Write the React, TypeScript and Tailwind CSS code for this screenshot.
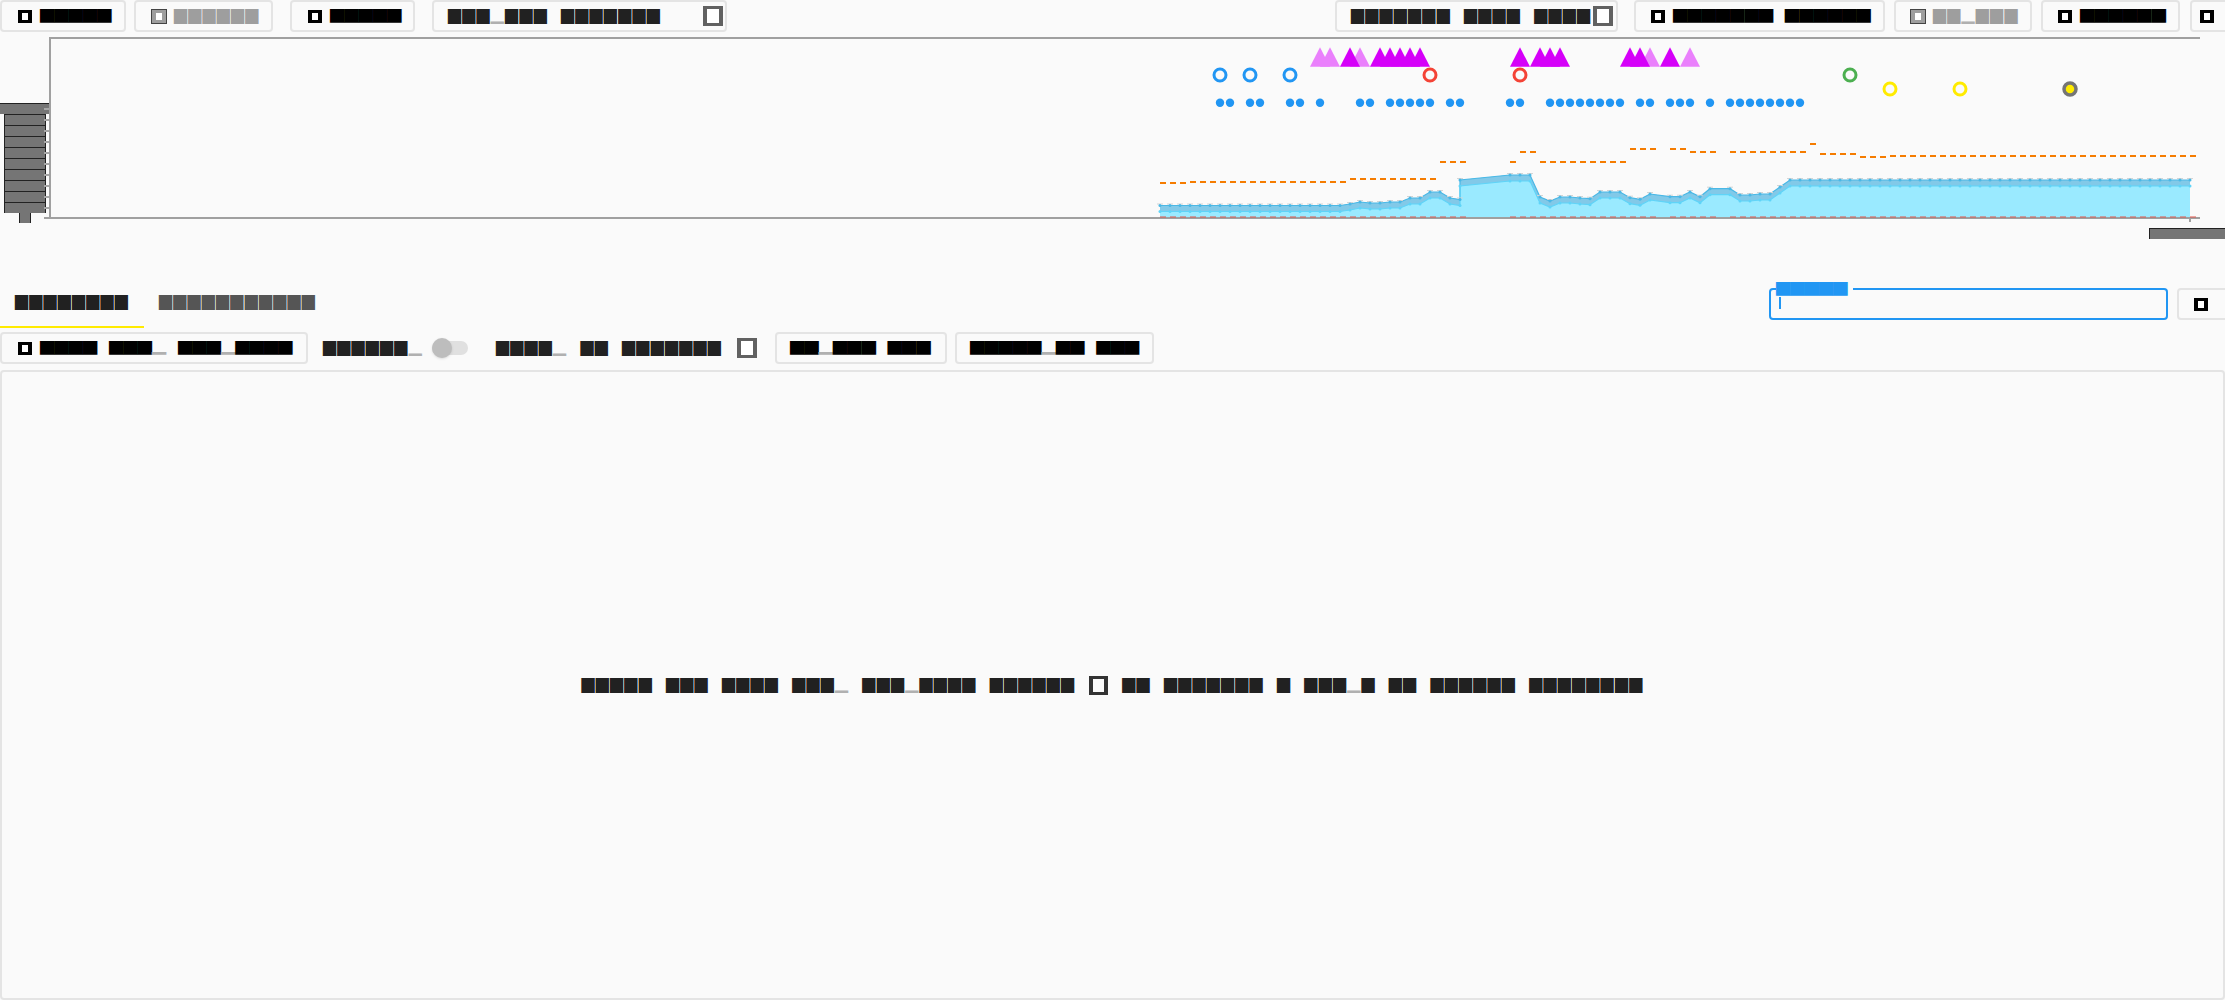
import React from "react";

// the reference font has no glyphs: every character shows as a filled box
const tofu = "pb-[5px] text-[17px] tracking-[1.2px] [word-spacing:6.5px] leading-[16px]";
const solid = "pb-[8px] text-[18.6px] tracking-[-0.02px] [word-spacing:6px] leading-[16px]";

function Label({ text, solidBox, className = "" }: { text: string; solidBox?: boolean; className?: string }) {
  const parts = text.split(/(▁)/);
  return (
    <span className={`inline-block whitespace-pre ${solidBox ? solid : tofu} ${className}`}>
      {parts.map((p, i) =>
        p === "▁" ? (
          <span key={i} className="text-[#b0b0b0]">
            {p}
          </span>
        ) : (
          p
        )
      )}
    </span>
  );
}

function BoxIcon({ gray }: { gray?: boolean }) {
  return (
    <span
      className={`block h-[13px] w-[14px] shrink-0 border-x-[4px] border-y-[3px] bg-white ${
        gray ? "border-[#9e9e9e] outline outline-1 outline-[#444]" : "border-black"
      }`}
    />
  );
}

function BigIcon() {
  return <span className="block h-5 w-5 shrink-0 border-x-[4px] border-y-[3px] border-[#616161] bg-white" />;
}

function Btn({ children, className = "" }: { children: React.ReactNode; className?: string }) {
  return (
    <div className={`flex h-8 shrink-0 items-center rounded border-2 border-[#e4e4e4] bg-[#fafafa] ${className}`}>
      {children}
    </div>
  );
}

function range(from: number, to: number) {
  const out: number[] = [];
  for (let x = from; x <= to; x += 10) out.push(x);
  return out;
}

const BLUE_DOTS = [
  1220, 1230, 1250, 1260, 1290, 1300, 1320, 1360, 1370, 1390, 1400, 1410, 1420, 1430, 1450, 1460, 1510, 1520,
  1550, 1560, 1570, 1580, 1590, 1600, 1610, 1620, 1640, 1650, 1670, 1680, 1690, 1710, 1730, 1740, 1750, 1760,
  1770, 1780, 1790, 1800,
];

const LIGHT_TRI = [1320, 1330, 1360, 1650, 1690];
const DARK_TRI = [1350, 1380, 1390, 1400, 1410, 1420, 1520, 1540, 1550, 1560, 1630, 1640, 1670];

const ORANGE: [number[], number][] = [
  [range(1160, 1180), 183],
  [range(1190, 1340), 182],
  [range(1350, 1430), 179],
  [range(1440, 1460), 162],
  [[1510], 162],
  [[1520, 1530], 152],
  [range(1540, 1620), 162],
  [[1630, 1640, 1650, 1670, 1680], 149],
  [[1690, 1700, 1710], 152],
  [range(1730, 1800), 152],
  [[1810], 144],
  [range(1820, 1850), 154],
  [range(1860, 1880), 157],
  [range(1890, 2190), 156],
];

const BAND: [number, number][] = [
  ...range(1160, 1340).map((x) => [x, 205.5] as [number, number]),
  [1350, 204], [1360, 202], [1370, 203], [1380, 203], [1390, 202], [1400, 202], [1410, 198], [1420, 198],
  [1430, 192], [1440, 192], [1450, 198], [1460, 199.5], [1460, 180], [1510, 175], [1520, 175],
  [1530, 175], [1540, 197], [1550, 201], [1560, 197], [1570, 197], [1580, 198], [1590, 198.7], [1600, 192],
  [1610, 192], [1620, 192], [1630, 197.7], [1640, 199.3], [1650, 194], [1670, 196.7], [1680, 196.7],
  [1690, 192], [1700, 196.7], [1710, 188.7], [1730, 188.7], [1740, 195], [1750, 195], [1760, 194], [1770, 194],
  [1780, 187], [1790, 180],
  ...range(1800, 2190).map((x) => [x, 180] as [number, number]),
];

function poly(pts: [number, number][], dy = 0) {
  return pts.map(([x, y]) => `${x},${y + dy}`).join(" ");
}

function Chart() {
  const lower = [...BAND].reverse();
  const ticks = [109, 120, 131, 142, 153, 164, 175, 186, 197, 208];
  const rows = [114, 125, 136, 147, 158, 169, 180, 191, 202];
  const baseline = [...new Set(BAND.map(([x]) => x))];
  return (
    <svg viewBox="0 32 2225 208" className="block h-[208px] w-[2225px] shrink-0">
      {/* y axis labels */}
      <rect x="0" y="103" width="50" height="11" fill="#757575" />
      <rect x="0" y="103" width="50" height="1" fill="#222" />
      {rows.map((y) => (
        <g key={y}>
          <rect x="4" y={y} width="42" height="11" fill="#757575" />
          <rect x="4" y={y} width="42" height="1" fill="#222" />
          <rect x="4" y={y} width="1" height="11" fill="#222" />
          <rect x="45" y={y} width="1" height="11" fill="#222" />
        </g>
      ))}
      <rect x="19" y="213" width="12" height="10" fill="#757575" />
      <rect x="19" y="213" width="1" height="10" fill="#222" />
      <rect x="30" y="213" width="1" height="10" fill="#222" />
      {ticks.map((y) => (
        <rect key={y} x="44" y={y - 1} width="6" height="2" fill="#a6a6a6" />
      ))}

      {/* area and band */}
      <polygon points={`1160,217 ${poly(BAND)} 2190,217`} fill="#9aeaff" />
      <polygon points={`${poly(BAND)} ${poly(lower, 6)}`} fill="#82c9e8" />
      <polyline points={poly(BAND)} fill="none" stroke="#4ab8e6" strokeWidth="1.2" />
      <polyline points={poly(BAND, 6)} fill="none" stroke="#5fd4f8" strokeWidth="1.2" />
      {BAND.map(([x, y], i) => (
        <g key={i}>
          <rect x={x - 3} y={y - 2} width="6" height="1" fill="#d4d4d4" />
          <circle cx={x} cy={y} r="1.5" fill="#4ab8e6" />
          <circle cx={x} cy={y + 6} r="1.5" fill="#5fd4f8" />
        </g>
      ))}

      {/* axes */}
      <rect x="49" y="37" width="2" height="181" fill="#a0a0a0" />
      <rect x="49" y="37" width="2151" height="2" fill="#a0a0a0" />
      <rect x="44" y="217" width="2156" height="2" fill="#a0a0a0" />
      <rect x="2189" y="217" width="2" height="5" fill="#a0a0a0" />
      {baseline.map((x) => (
        <rect key={x} x={x} y="216.5" width="6" height="1" fill="#e0574c" />
      ))}

      {/* orange steps */}
      {ORANGE.map(([xs, y]) =>
        xs.map((x) => <rect key={x} x={x} y={y - 1} width="6" height="2" fill="#f57c00" />)
      )}

      {/* markers */}
      {BLUE_DOTS.map((x) => (
        <circle key={x} cx={x} cy="102.7" r="4.2" fill="#2196f3" />
      ))}
      {LIGHT_TRI.map((x, i) => (
        <polygon key={i} points={`${x - 10},66.7 ${x},47.3 ${x + 10},66.7`} fill="#ea80fc" />
      ))}
      {DARK_TRI.map((x) => (
        <polygon key={x} points={`${x - 10},66.7 ${x},47.3 ${x + 10},66.7`} fill="#d500f9" />
      ))}
      {[1220, 1250, 1290].map((x) => (
        <circle key={x} cx={x} cy="75" r="6" fill="none" stroke="#2196f3" strokeWidth="3" />
      ))}
      {[1430, 1520].map((x) => (
        <circle key={x} cx={x} cy="75" r="6" fill="none" stroke="#f44336" strokeWidth="3" />
      ))}
      <circle cx="1850" cy="75" r="6" fill="none" stroke="#4caf50" strokeWidth="3" />
      {[1890, 1960].map((x) => (
        <circle key={x} cx={x} cy="89" r="6" fill="none" stroke="#ffeb00" strokeWidth="3" />
      ))}
      <circle cx="2070" cy="89" r="6" fill="#ffeb00" stroke="#757575" strokeWidth="3.5" />

      {/* clipped tick label */}
      <rect x="2149" y="228" width="76" height="11" fill="#757575" />
      <rect x="2149" y="228" width="76" height="1" fill="#222" />
      <rect x="2149" y="228" width="1" height="11" fill="#222" />
    </svg>
  );
}

export default function App() {
  return (
    <div className="flex h-[1000px] w-[2225px] flex-col overflow-hidden bg-[#fafafa] text-[#212121] [font-family:'DejaVu_Sans',sans-serif]">
      {/* top toolbar */}
      <div className="flex h-8 shrink-0 justify-between">
        <div className="flex">
          <Btn className="w-[126px] gap-2 pl-4">
            <BoxIcon />
            <Label solidBox text="▅▅▅▅▅" className="text-black" />
          </Btn>
          <Btn className="ml-2 w-[139px] gap-2 pl-4">
            <BoxIcon gray />
            <Label text="▆▆▆▆▆▆" className="text-[#9e9e9e]" />
          </Btn>
          <Btn className="ml-[17px] w-[125px] gap-2 pl-4">
            <BoxIcon />
            <Label solidBox text="▅▅▅▅▅" className="text-black" />
          </Btn>
          <Btn className="ml-[17px] w-[295px] justify-between pl-[14px] pr-[2px]">
            <Label text="▆▆▆▁▆▆▆ ▆▆▆▆▆▆▆" />
            <BigIcon />
          </Btn>
        </div>
        <div className="flex">
          <Btn className="w-[283px] justify-between pl-[14px] pr-[3px]">
            <Label text="▆▆▆▆▆▆▆ ▆▆▆▆ ▆▆▆▆" />
            <BigIcon />
          </Btn>
          <Btn className="ml-4 w-[251px] gap-2 pl-[15px]">
            <BoxIcon />
            <Label solidBox text="▅▅▅▅▅▅▅ ▅▅▅▅▅▅" className="text-black" />
          </Btn>
          <Btn className="ml-[9px] w-[138px] gap-2 pl-[15px]">
            <BoxIcon gray />
            <Label text="▆▆▁▆▆▆" className="text-[#9e9e9e]" />
          </Btn>
          <Btn className="ml-[9px] w-[139px] gap-2 pl-[15px]">
            <BoxIcon />
            <Label solidBox text="▅▅▅▅▅▅" className="text-black" />
          </Btn>
          <Btn className="-mr-1 ml-[10px] w-[39px] pl-2">
            <BoxIcon />
          </Btn>
        </div>
      </div>

      <Chart />

      {/* tabs and search */}
      <div className="mt-[42px] flex h-[46px] shrink-0 justify-between">
        <div className="flex">
          <div className="flex w-[144px] items-start justify-center border-b-2 border-[#ffeb00] pt-[10px]">
            <Label text="▆▆▆▆▆▆▆▆" />
          </div>
          <div className="flex items-start px-[15px] pt-[10px]">
            <Label text="▆▆▆▆▆▆▆▆▆▆▆" className="text-[#555]" />
          </div>
        </div>
        <div className="mt-[6px] flex items-start gap-[9px]">
          <div className="relative h-8 w-[399px] rounded border-2 border-[#2196f3] pl-2 pt-[7px]">
            <span className="absolute -top-[13px] left-[5px] bg-[#fafafa] pr-[6px] leading-none">
              <Label solidBox text="▅▅▅▅▅" className="text-[#2196f3]" />
            </span>
            <span className="relative block h-3 w-[2px] bg-[#2196f3]" />
          </div>
          <Btn className="-mr-1 w-[52px] pl-[15px]">
            <BoxIcon />
          </Btn>
        </div>
      </div>

      {/* second toolbar */}
      <div className="mt-1 flex h-8 shrink-0 items-center">
        <Btn className="w-[308px] gap-2 pl-4">
          <BoxIcon />
          <Label solidBox text="▅▅▅▅ ▅▅▅▁ ▅▅▅▁▅▅▅▅" className="text-black" />
        </Btn>
        <Label text="▆▆▆▆▆▆▁" className="ml-[15px]" />
        <span className="relative ml-[9px] block h-[14px] w-9 rounded-full bg-[#e0e0e0]">
          <span className="absolute -top-[3px] left-0 h-5 w-5 rounded-full bg-[#bdbdbd] shadow-sm" />
        </span>
        <Label text="▆▆▆▆▁ ▆▆ ▆▆▆▆▆▆▆" className="ml-[28px]" />
        <span className="ml-[15px]">
          <BigIcon />
        </span>
        <Btn className="ml-[18px] w-[172px] pl-[13px]">
          <Label solidBox text="▅▅▁▅▅▅ ▅▅▅" className="text-black" />
        </Btn>
        <Btn className="ml-2 w-[199px] pl-[13px]">
          <Label solidBox text="▅▅▅▅▅▁▅▅ ▅▅▅" className="text-black" />
        </Btn>
      </div>

      {/* table body, empty */}
      <div className="mt-[6px] flex flex-1 items-center justify-center rounded border-2 border-[#e4e4e4]">
        <span className="flex items-center gap-[14px]">
          <Label text="▆▆▆▆▆ ▆▆▆ ▆▆▆▆ ▆▆▆▁ ▆▆▆▁▆▆▆▆ ▆▆▆▆▆▆" />
          <span className="block h-[19px] w-[19px] border-x-[4px] border-y-[3px] border-[#333] bg-[#fafafa]" />
          <Label text="▆▆ ▆▆▆▆▆▆▆ ▆ ▆▆▆▁▆ ▆▆ ▆▆▆▆▆▆ ▆▆▆▆▆▆▆▆" />
        </span>
      </div>
    </div>
  );
}
